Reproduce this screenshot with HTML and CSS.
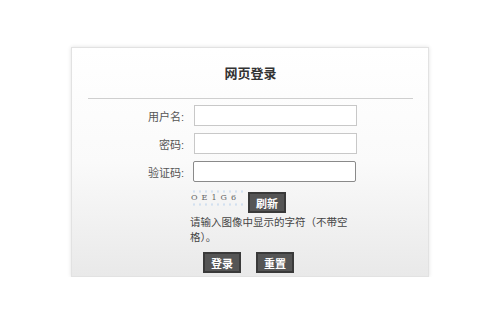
FILE: index.html
```html
<!DOCTYPE html>
<html lang="zh-CN">
<head>
    <meta charset="UTF-8">
    <meta name="viewport" content="width=device-width, initial-scale=1.0">
    <title>网页登录</title>
    <link rel="stylesheet" href="styles.css">
</head>
<body>
    <div class="login-box">
        <div class="title">网页登录</div>
        <form class="login-form">
            <div class="row">
                <label>用户名:</label>
                <input type="text" class="field">
            </div>
            <div class="row">
                <label>密码:</label>
                <input type="password" class="field">
            </div>
            <div class="row">
                <label>验证码:</label>
                <input type="text" class="field active">
            </div>
            <div class="captcha-row">
                <span class="captcha">OE1G6</span>
                <button type="button" class="btn">刷新</button>
            </div>
            <p class="hint">请输入图像中显示的字符（不带空格）。</p>
            <div class="actions">
                <button type="submit" class="btn">登录</button>
                <button type="reset" class="btn">重置</button>
            </div>
        </form>
    </div>
</body>
</html>
```

FILE: styles.css
```css
body {
    margin: 0;
    padding: 0;
    background-color: #fff;
    font-family: "Liberation Sans", "Noto Sans CJK SC", sans-serif;
    color: #333;
}

.login-box {
    width: 358px;
    margin: 47px 0 0 71px;
    border: 1px solid #e2e2e2;
    background: linear-gradient(#fff 0%, #fafafa 50%, #e9e9e9 100%);
    box-shadow: 0 0 4px rgba(0, 0, 0, 0.12);
    padding: 0 15px 3px 16px;
    box-sizing: border-box;
}

.title {
    height: 50px;
    line-height: 52px;
    text-align: center;
    font-size: 13px;
    font-weight: bold;
    color: #333;
    border-bottom: 1px solid #cfcfcf;
}

.login-form {
    padding-top: 6px;
}

.row {
    display: flex;
    align-items: center;
    height: 21px;
    margin-bottom: 7px;
}

.row label {
    width: 96px;
    margin-right: 10px;
    text-align: right;
    font-size: 11px;
    color: #555;
}

.field {
    width: 163px;
    height: 21px;
    box-sizing: border-box;
    border: 1px solid #c8c8c8;
    background: #fff;
    padding: 0 3px;
    margin: 0;
}

.row .active {
    margin-left: -1px;
    border-color: #8a8a8a;
    border-radius: 2px;
}

.captcha-row {
    display: flex;
    align-items: flex-start;
    padding-left: 103px;
    height: 26px;
    margin-top: -1px;
}

.captcha {
    width: 55px;
    height: 20px;
    line-height: 20px;
    margin-right: 2px;
    font-family: "DejaVu Serif", serif;
    font-size: 8px;
    letter-spacing: 4px;
    color: #666;
    background-image: radial-gradient(rgba(170, 200, 235, 0.45) 0.6px, transparent 0.8px);
    background-size: 6px 13px;
    background-position: 0 -3px;
}

.btn {
    height: 21px;
    padding: 0 6px;
    background-color: #555;
    border: 2px solid #3a3a3a;
    color: #fff;
    font-family: "Liberation Sans", "Noto Sans CJK SC", sans-serif;
    font-size: 11px;
    font-weight: bold;
    cursor: pointer;
    margin-top: 4px;
}

.hint {
    margin: 1px 0 0 102px;
    width: 160px;
    font-size: 10.5px;
    line-height: 15px;
    color: #444;
}

.actions {
    display: flex;
    gap: 15px;
    padding-left: 115px;
    margin-top: 7px;
}

.actions .btn {
    margin-top: 0;
}
```
